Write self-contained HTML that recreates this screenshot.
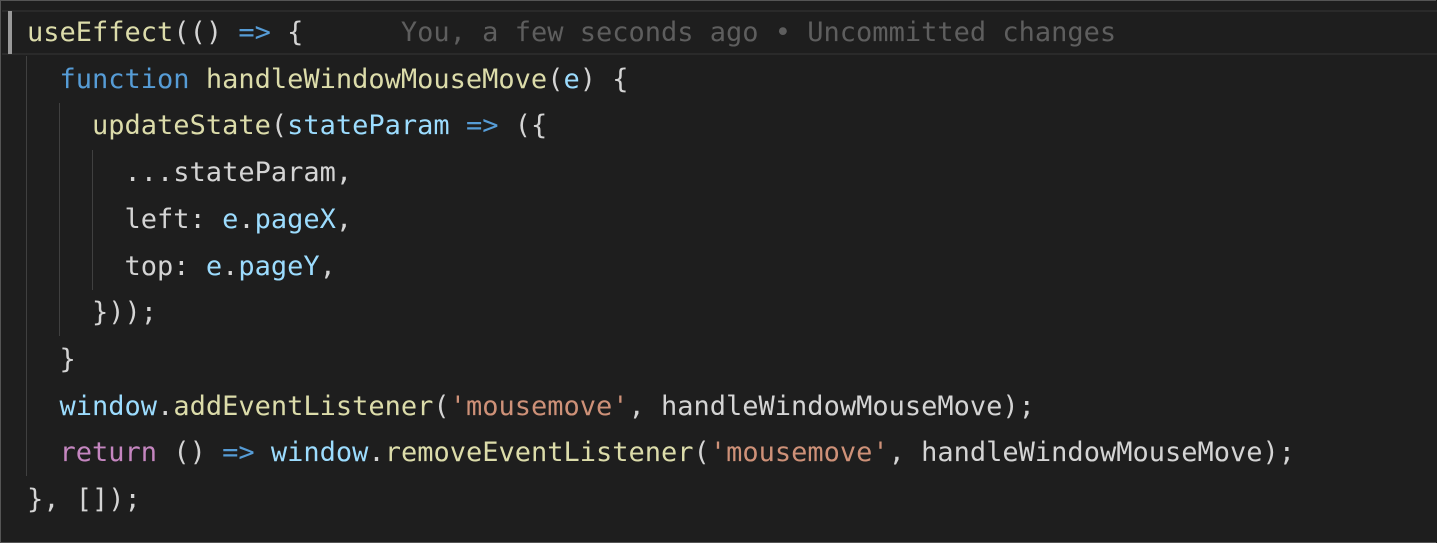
<!DOCTYPE html>
<html><head><style>
html,body{margin:0;padding:0;background:#1e1e1e;}
body{width:1437px;height:543px;overflow:hidden;position:relative;}
.frame{position:absolute;left:0;top:0;width:1435px;height:541px;border:1px solid #555;border-right:none;}
.hl{position:absolute;left:2px;right:0;top:10px;height:45px;border-top:2px solid #2a2a2a;border-bottom:2px solid #2a2a2a;box-sizing:border-box;}
.cur{position:absolute;left:8px;top:11px;width:4px;height:43px;background:#9a9a9a;}
.g{position:absolute;width:1px;background:#404040;}
pre{position:absolute;left:27px;top:10px;margin:0;font-family:"DejaVu Sans Mono","Liberation Mono",monospace;font-size:27px;line-height:46.7px;color:#d4d4d4;}
.y{color:#dcdcaa}.b{color:#569cd6}.l{color:#9cdcfe}.s{color:#ce9178}.p{color:#c586c0}.c{color:#5e5e5e}
</style></head><body>
<div class="frame"></div>
<div class="hl"></div>
<div class="cur"></div>
<div class="g" style="left:26px;top:56px;height:420px"></div>
<div class="g" style="left:59px;top:103px;height:233px"></div>
<div class="g" style="left:92px;top:150px;height:140px"></div>
<pre><span class="y">useEffect</span>(() <span class="b">=&gt;</span> {      <span class="c">You, a few seconds ago • Uncommitted changes</span>
  <span class="b">function</span> <span class="y">handleWindowMouseMove</span>(<span class="l">e</span>) {
    <span class="y">updateState</span>(<span class="l">stateParam</span> <span class="b">=&gt;</span> ({
      ...stateParam,
      left: <span class="l">e</span>.<span class="l">pageX</span>,
      top: <span class="l">e</span>.<span class="l">pageY</span>,
    }));
  }
  <span class="l">window</span>.<span class="y">addEventListener</span>(<span class="s">'mousemove'</span>, handleWindowMouseMove);
  <span class="p">return</span> () <span class="b">=&gt;</span> <span class="l">window</span>.<span class="y">removeEventListener</span>(<span class="s">'mousemove'</span>, handleWindowMouseMove);
}, []);</pre>
</body></html>
